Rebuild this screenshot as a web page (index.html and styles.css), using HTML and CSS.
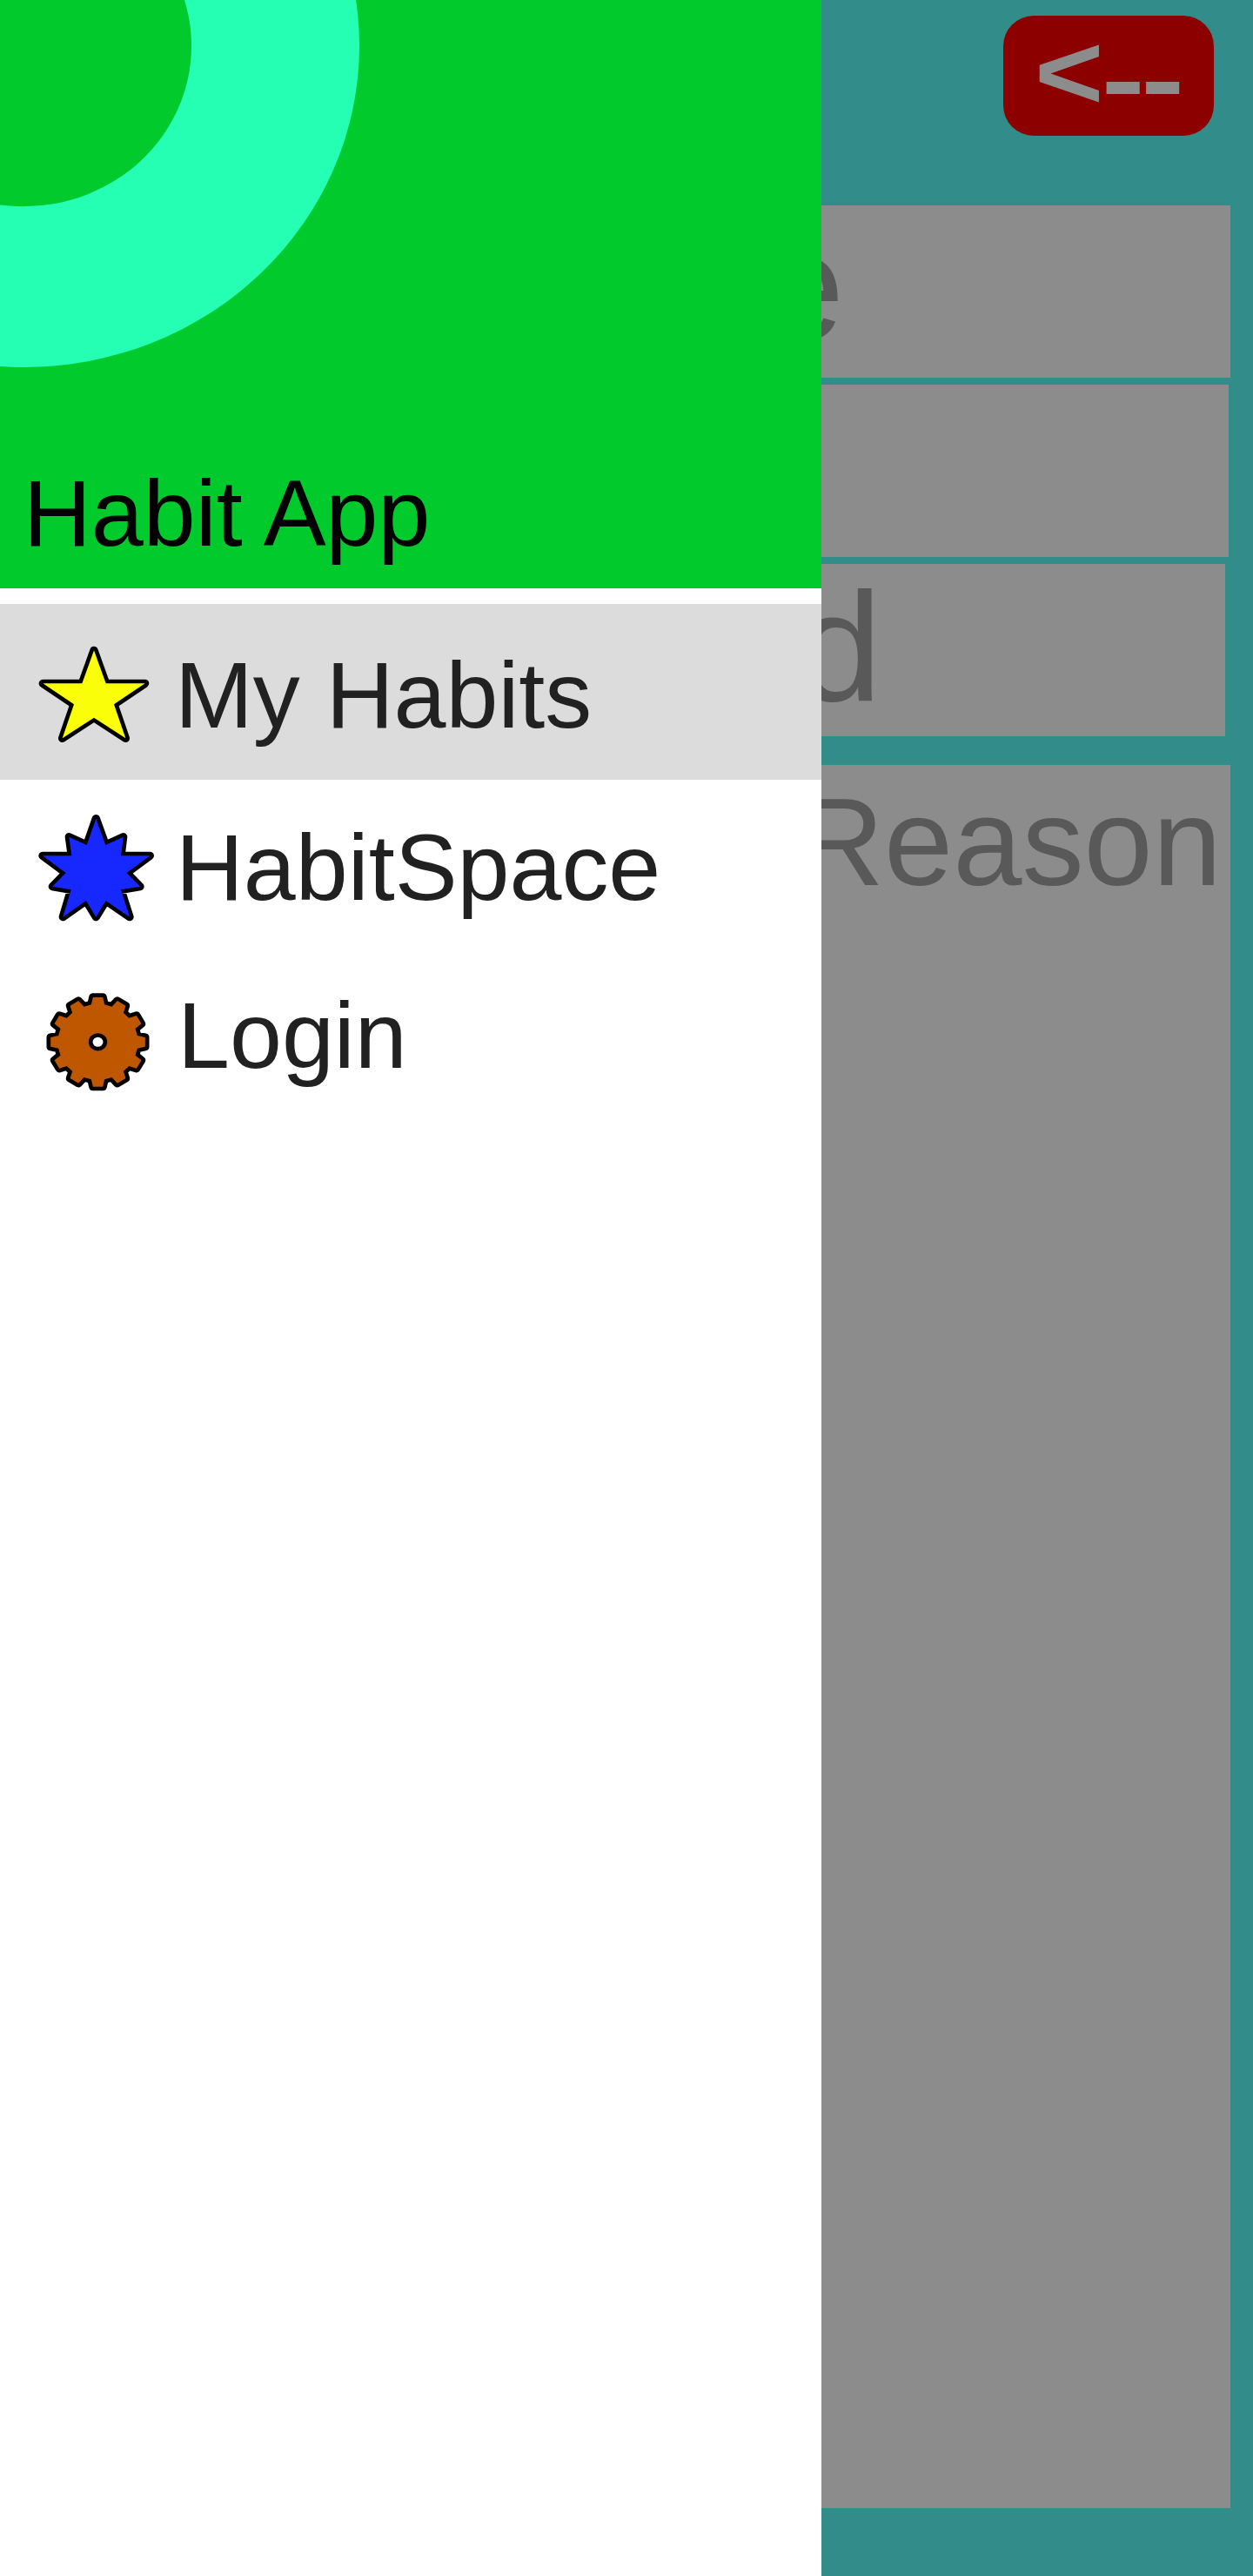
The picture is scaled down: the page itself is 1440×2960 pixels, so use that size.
FILE: index.html
```html
<!DOCTYPE html>
<html lang="en">
<head>
<meta charset="utf-8">
<title>Habit App</title>
<link rel="stylesheet" href="styles.css">
</head>
<body>
<div class="screen">
  <main class="form">
    <header class="topbar"><button class="back" type="button"><span class="back-head">&lt;</span><span class="back-tail">--</span></button></header>
    <div class="field field-name"><span class="hint">Name</span></div>
    <div class="field field-blank"></div>
    <div class="field field-date"><span class="hint">End</span></div>
    <div class="field field-reason"><span class="hint">Reason</span></div>
  </main>

  <nav class="drawer">
    <header class="brand">
      <svg class="ring" width="420" height="430" viewBox="0 0 420 430">
        <ellipse class="ring-outer" cx="27" cy="52.7" rx="386" ry="369.3"/>
        <ellipse class="ring-inner" cx="27" cy="52.7" rx="193" ry="184.5"/>
      </svg>
      <h1 class="brand-name">Habit App</h1>
    </header>
    <ul class="menu">
      <li class="item item-habits">
        <svg class="icon" viewBox="0 0 480 450">
          <path class="star" d="M234 82 275 196 410 196 303 268 343 385 234 314 125 385 165 268 58 196 193 196Z"/>
        </svg>
        <span class="label">My Habits</span>
      </li>
      <li class="item item-space">
        <svg class="icon" viewBox="0 0 480 450">
          <path class="burst" d="M241 62 274 153 335 125 327 190 427 190 347 249 393 296 327 307 357 401 275 345 241 401 207 345 127 401 155 307 91 296 137 249 57 190 157 190 148 125 209 153Z"/>
        </svg>
        <span class="label">HabitSpace</span>
      </li>
      <li class="item item-login">
        <svg class="icon" viewBox="0 0 480 450">
          <g transform="translate(247.5 232)">
            <path class="gear" d="M17-154 23-129 48-122 67-142 96-125 88-101 107-83 133-91 150-63 129-46 136-22 163-16 163 16 136 22 129 46 150 63 133 91 107 83 88 101 96 125 67 142 48 122 23 129 17 154-17 154-23 129-48 122-67 142-96 125-88 101-107 83-133 91-150 63-129 46-136 22-163 16-163-16-136-22-129-46-150-63-133-91-107-83-88-101-96-125-67-142-48-122-23-129-17-154Z"/>
            <ellipse class="hub" rx="25" ry="23.5"/>
          </g>
        </svg>
        <span class="label">Login</span>
      </li>
    </ul>
  </nav>
</div>
</body>
</html>
```
FILE: styles.css
```css
* { box-sizing: border-box; }

body {
  margin: 0;
  font-family: "Liberation Sans", Arial, sans-serif;
}

.screen {
  position: relative;
  width: 1440px;
  height: 2960px;
  overflow: hidden;
  background: #328c89;
}

/* Dimmed form behind the drawer */
.form {
  display: flex;
  flex-direction: column;
  height: 100%;
  padding-left: 26px;
}

.topbar {
  display: flex;
  justify-content: flex-end;
  height: 236px;
  padding: 18px 45px 0 0;
}

.back {
  display: flex;
  justify-content: center;
  align-items: flex-start;
  width: 242px;
  height: 137.5px;
  padding: 0;
  border: 0;
  border-radius: 35px;
  background: #8c0000;
  color: #8c8c8c;
  font: bold 136px/136px "Liberation Sans", Arial, sans-serif;
}

.back-head { transform: translateY(-3px) scaleY(.9); }

.back-tail {
  margin: 0 2.5px 0 -2.5px;
  font-size: 150px;
  letter-spacing: -4.6px;
  transform: translateY(4.5px) scaleY(.78);
}

.field {
  display: flex;
  justify-content: flex-end;
  height: 198px;
  margin-bottom: 8px;
  background: #8c8c8c;
  color: #595959;
  font-size: 178px;
  line-height: 176px;
}

.hint { white-space: nowrap; }

.field-name { margin-right: 26px; padding: 4.5px 443.4px 0 0; }
.field-blank { margin-right: 28px; }
.field-date { margin-right: 32px; padding: 8px 394.5px 0 0; }

.field-reason {
  height: 2003px;
  margin: 25px 26px 0 0;
  padding: 14.5px 10px 0 0;
  font-size: 142.4px;
  line-height: 148px;
}

/* Navigation drawer */
.drawer {
  position: absolute;
  top: 0;
  left: 0;
  width: 944px;
  height: 100%;
  background: #fff;
}

.brand {
  position: relative;
  display: flex;
  align-items: flex-end;
  height: 676px;
  padding: 0 0 30px 27px;
  background: #00ca2c;
}

.ring { position: absolute; top: 0; left: 0; }
.ring-outer { fill: #24ffb4; }
.ring-inner { fill: #00ca2c; }

.brand-name,
.label {
  margin: 0;
  font-size: 107.8px;
  font-weight: 400;
  line-height: 112px;
  white-space: nowrap;
}

.brand-name { color: #000; }

.menu {
  margin: 18px 0 0;
  padding: 0;
  list-style: none;
}

.item {
  display: flex;
  align-items: flex-start;
  height: 200px;
  padding: 24px 0 0 30px;
  color: #212121;
}

.item-habits {
  height: 202px;
  padding-top: 26px;
  background: #dcdcdc;
}

.icon {
  flex: none;
  width: 160px;
  height: 150px;
}

.icon path,
.hub { stroke: #000; stroke-linejoin: round; }
.icon path { stroke-width: 28px; paint-order: stroke; }
.star { fill: #faff09; }
.burst { fill: #1728ff; }
.gear { fill: #bf5600; }
.hub { fill: #fff; stroke-width: 14px; }

.item-habits .label { margin: 23px 0 0 11px; }
.item-space .label { margin: 21px 0 0 12px; }
.item-login .label { margin: 14px 0 0 14px; }
```
